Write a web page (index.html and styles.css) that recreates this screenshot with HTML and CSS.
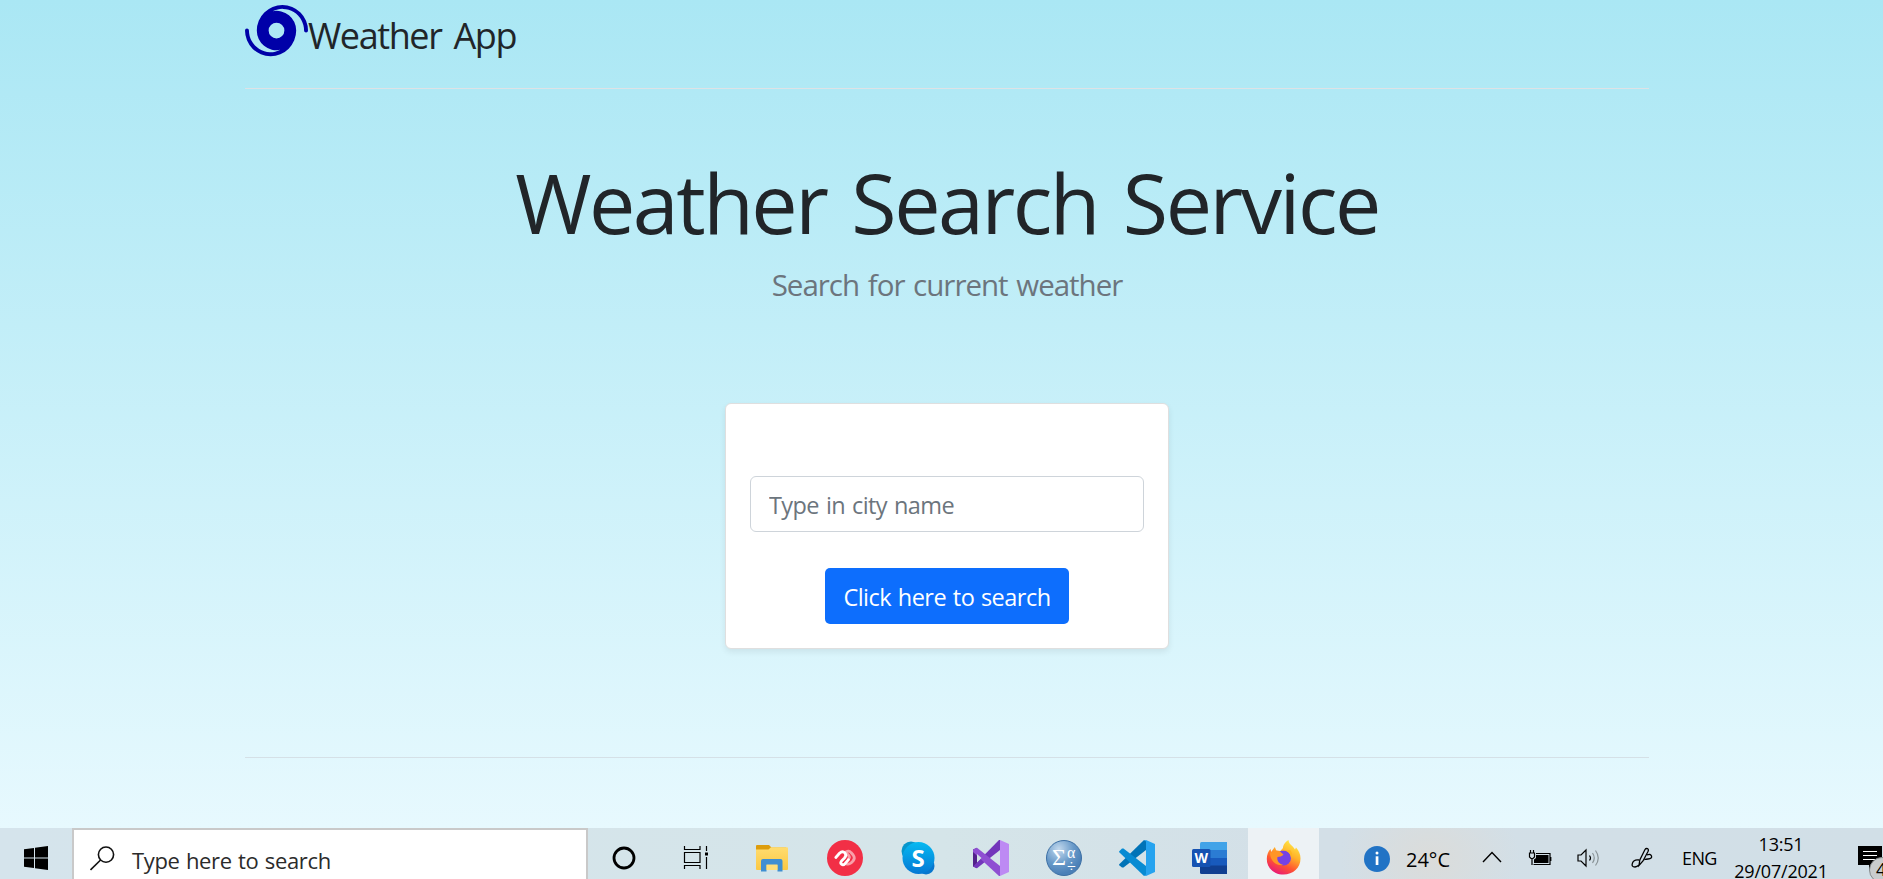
FILE: index.html
```html
<!DOCTYPE html>
<html lang="en">
<head>
<meta charset="utf-8">
<title>Weather App</title>
<link rel="stylesheet" href="styles.css">
</head>
<body>
<div class="page">
  <header class="site-header">
    <svg class="logo" viewBox="0 0 16 16" fill="#0000a8"><path d="M6.999 2.6A5.5 5.5 0 0 1 15 7.5a.5.5 0 0 0 1 0 6.5 6.5 0 1 0-13 0 5 5 0 0 0 6.001 4.9A5.5 5.5 0 0 1 1 7.5a.5.5 0 0 0-1 0 6.5 6.5 0 1 0 13 0 5 5 0 0 0-6.001-4.9zM10 7.5a2 2 0 1 1-4 0 2 2 0 0 1 4 0z"/></svg>
    <span class="brand">Weather App</span>
  </header>
  <main class="main">
    <h1 class="title">Weather Search Service</h1>
    <p class="subtitle">Search for current weather</p>
    <form class="card">
      <input class="city" type="text" placeholder="Type in city name">
      <button class="submit" type="button">Click here to search</button>
    </form>
  </main>
  <footer class="site-footer"></footer>
</div>
<div class="taskbar">
  <div class="start"><svg width="24" height="24" viewBox="0 0 24 24"><path d="M0 3.3 10 2v9.4H0zM11 1.8 24 0v11.4H11zM0 12.4h10V22L0 20.7zM11 12.4h13V24l-13-1.8z"/></svg></div>
  <div class="search">
    <svg width="26" height="26" viewBox="0 0 26 26" fill="none" stroke="#111" stroke-width="1.6"><circle cx="16" cy="8.600" r="7.6"/><path d="M10.600 14 .500 24"/></svg>
    <span class="search-text">Type here to search</span>
  </div>
  <div class="app cortana"><svg width="36" height="36" viewBox="0 0 36 36"><circle cx="18" cy="18" r="10" fill="none" stroke="#000" stroke-width="2.8"/></svg></div>
  <div class="app taskview"><svg width="36" height="36" viewBox="0 0 36 36" fill="none" stroke="#000" stroke-width="1.2"><path d="M4.500 6v3.500h15.500V6M4.500 12.500h15.500v10H4.500zM4.500 29v-3.500h15.500V29M26.500 6v5M26.500 17v12"/><path d="M25 12.500h3v3h-3z" fill="#000" stroke="none"/></svg></div>
  <div class="app"><svg width="36" height="36" viewBox="0 0 36 36"><defs><linearGradient id="fold" x1="0" y1="0" x2="0" y2="1"><stop offset="0" stop-color="#ffdc70"/><stop offset="1" stop-color="#fbc843"/></linearGradient></defs><path d="M2 6q0-1 1-1h12l2.500 2.500H32V12H2z" fill="#dd9d0d"/><path d="M2 9.500h12.500L17 7.300h16q1 0 1 1V29q0 1-1 1H3q-1 0-1-1z" fill="url(#fold)"/><path d="M7 31.500V21q0-2 2-2h17.500q2 0 2 2v10.500H23.500V25H12.500v6.500z" fill="#3f8fd2"/><path d="M12.500 24.500h11V30h-11z" fill="#ffdf7b"/></svg></div>
  <div class="app"><svg width="36" height="36" viewBox="0 0 36 36"><circle cx="18" cy="18" r="18" fill="#f22f46"/><g fill="none" stroke-width="2.800" stroke-linecap="round" stroke-linejoin="round"><path d="M19 12q3-2 5 .5l2.200 2.500q2.300 3-.2 6l-2 2q-2.500 2-5 .5M19 12.500l3 3.500q1 1.500-.5 3" stroke="#f9a0a9"/><path d="M8.800 17.500 12.500 13.300q3-2.800 5.500-.3 1.800 2.500-.5 5l-3 3q-1.500 2 0 3.200 1.700 1.300 3.500-.5l3.500-4" stroke="#fff"/></g></svg></div>
  <div class="app"><svg width="36" height="36" viewBox="0 0 36 36"><defs><linearGradient id="sky" x1="0" y1="0" x2="0" y2="1"><stop offset="0" stop-color="#06b9f1"/><stop offset="1" stop-color="#0578d4"/></linearGradient></defs><circle cx="11" cy="11" r="9.500" fill="#0796cc"/><circle cx="26" cy="26" r="8.500" fill="#0877ce"/><circle cx="18.500" cy="18" r="16" fill="url(#sky)"/><text x="18" y="26.500" class="skype-s" text-anchor="middle">S</text></svg></div>
  <div class="app"><svg width="36" height="36" viewBox="0 0 36 36"><path d="M0 9.500 4 7.700V28.300L0 26.500z" fill="#52218a"/><path d="M0 26.500 26 0h1v10L4 28.300z" fill="#7336bb"/><path d="M0 9.500 4 7.700 27 26v10h-1L0 12z" fill="#8f4fd2"/><path d="M4 14v8l4.500-4z" fill="#d4e1e7"/><path d="M27 0 36 4v28l-9 4z" fill="#bd8af3"/></svg></div>
  <div class="app"><svg width="36" height="36" viewBox="0 0 36 36"><defs><radialGradient id="math" cx=".35" cy=".25" r=".7"><stop offset="0" stop-color="#c3d9ed"/><stop offset=".6" stop-color="#699ac9"/><stop offset="1" stop-color="#4b80b7"/></radialGradient></defs><circle cx="18" cy="18" r="17.500" fill="url(#math)" stroke="#3c6fa4"/><text x="6" y="25" class="sigma">Σ</text><text x="21" y="18" class="alpha">α</text><text x="21" y="32" class="alpha">÷</text></svg></div>
  <div class="app"><svg width="36" height="36" viewBox="0 0 36 36"><path d="M0 24.500 25 0l2 1v9L4.500 27.500H3L.5 25.500z" fill="#0073b7"/><path d="M0 11.500 3 8.500h1.500L27 26v9l-2 1L.5 12.500z" fill="#078bd3"/><path d="M25 35.800q2-.5 2-2V2q0-1.500-2-2h2l9 4v28l-9 4z" fill="#26a3ef"/></svg></div>
  <div class="app"><svg width="36" height="36" viewBox="0 0 36 36"><path d="M8 4q0-2 1.500-2H35v9H8z" fill="#41a3e8"/><path d="M8 10h27v8H8z" fill="#2b7cd3"/><path d="M8 18h27v8H8z" fill="#185abd"/><path d="M8 25.500h27V34H9.500Q8 34 8 32.500z" fill="#103f91"/><rect x="0" y="9" width="18.500" height="18" rx="1.500" fill="#1552b2"/><text x="9.200" y="23" class="word-w" text-anchor="middle">W</text></svg></div>
  <div class="app active"><svg width="36" height="36" viewBox="0 0 36 36"><defs><linearGradient id="ff" x1=".8" y1="0" x2=".3" y2="1"><stop offset="0" stop-color="#fff04a"/><stop offset=".4" stop-color="#ffb02a"/><stop offset=".7" stop-color="#ff5530"/><stop offset="1" stop-color="#e8177a"/></linearGradient></defs><path d="M17.500 34.500C8 34.500.8 28 .8 19c0-4 1.500-8 3.800-10l.5 3 3.700-5 1.500 3.500 4 .5L17 8c0-3 2.500-6.500 5.500-8 .3 4 3 5 5 7.500l1.500 2 1-2c3 3 4.500 7 4.500 11C34.500 28 27 34.500 17.500 34.500z" fill="url(#ff)"/><circle cx="17.500" cy="18" r="7.500" fill="#7542e5"/><path d="M4 13c4-3 8-2.500 10-1.500l3.500 3c-1.500 2-4 2.200-6 2.500-1 4 2 7 6 8-8 1-13-4-13.500-12z" fill="#ff9526"/><path d="M16 11c5-1 9 2 9 7 2-3 1-6-1-8z" fill="#ffb41f"/></svg></div>
  <div class="tray">
    <svg class="info" width="26" height="26" viewBox="0 0 26 26"><circle cx="13" cy="13" r="13" fill="#2173c5"/><circle cx="13" cy="7" r="1.500" fill="#fff"/><path d="M11.700 10.300h2.700V19h-2.700z" fill="#fff"/></svg>
    <span class="temp">24°C</span>
    <svg class="chevron" width="20" height="14" viewBox="0 0 20 14" fill="none" stroke="#000" stroke-width="1.400"><path d="m1 12 9-9.500L19 12"/></svg>
    <svg class="battery" width="24" height="18" viewBox="0 0 24 18"><g fill="none" stroke="#000" stroke-width="1.200"><path d="M8 4.500h14v11H5.500M22.800 8v4M1.500 4h5v4L5 9.500H3L1.500 8zM2.500 4V1M5.500 4V1M4 9.500V16"/></g><path d="M8 6h12.500v8H6v-3.500L8 9z"/></svg>
    <svg class="volume" width="24" height="20" viewBox="0 0 24 20" fill="none" stroke="#000" stroke-width="1.200"><path d="M1 7h3l5-5v16l-5-5H1z"/><path d="M12.500 7.500q2 2.500 0 5"/><path d="M15.500 5q3.500 5 0 10M18.500 2.500q5.500 7.500 0 15" stroke="#8a9498"/></svg>
    <svg class="pen" width="22" height="22" viewBox="0 0 22 22" fill="none" stroke="#000" stroke-width="1.300"><path d="M8 18.500 8.800 13 14 2.500q1-1.500 2.500-.8T17 4.500L12 14zM8 13Q3 12 1.500 16T4 20q2-.2 4-2M16 8q3.500-1.500 4.500 1t-3.500 3-3.500 1"/></svg>
    <span class="lang">ENG</span>
    <div class="clock"><span class="time">13:51</span><span class="date">29/07/2021</span></div>
    <svg class="notify" width="25" height="33" viewBox="0 0 25 33"><path d="M0 0h24v19H15l-4 5v-5H0z"/><path d="M5 5.500h14M5 9.500h14M5 13.500h14" stroke="#fff" stroke-width="1.200"/><circle cx="24" cy="24" r="12.500" fill="#c9cccd" stroke="#858a8c"/><text x="18" y="30" class="badge">4</text></svg>
  </div>
</div>
</body>
</html>
```
FILE: styles.css
```css
* { box-sizing: border-box; }
html, body { margin: 0; height: 100%; overflow: hidden; }
body {
  display: flex;
  flex-direction: column;
  font-family: "Open Sans", "Noto Sans", sans-serif;
  color: #212529;
}
svg { display: block; flex: none; }
span { white-space: nowrap; }
.page {
  height: 828px;
  flex: none;
  padding: 0 234px 0 245px;
  background: linear-gradient(#aae7f4, #e7f9fe);
}
.site-header {
  display: flex;
  align-items: flex-start;
  height: 89px;
  border-bottom: 1px solid #dee2e6;
}
.logo { width: 63px; height: 63px; margin-top: 1px; }
.brand { font-size: 36px; line-height: 71px; letter-spacing: -1.4px; word-spacing: 4px; }
.main { display: flex; flex-direction: column; align-items: center; padding-top: 63px; }
.title { margin: 0; font-size: 82.6px; font-weight: 400; line-height: 100px; letter-spacing: -2.5px; word-spacing: 6px; white-space: nowrap; }
.subtitle { margin: 10px 0 96px; font-size: 29.5px; line-height: 45px; letter-spacing: -1px; word-spacing: 2px; color: #6c757d; }
.card {
  display: flex;
  flex-direction: column;
  align-items: center;
  width: 444px;
  height: 246px;
  padding: 72px 24px 0;
  background: #fff;
  border: 1px solid #dfdfdf;
  border-radius: 6px;
  box-shadow: 0 3px 6px rgba(0, 0, 0, 0.075);
}
.city {
  width: 394px;
  height: 56px;
  padding: 1px 18px 0;
  border: 1px solid #ced4da;
  border-radius: 6px;
  font: 23.5px "Open Sans", sans-serif;
  letter-spacing: -0.6px;
  word-spacing: 1.5px;
}
.city::placeholder { color: #6c757d; opacity: 1; }
.submit {
  width: 244px;
  height: 56px;
  margin-top: 36px;
  padding: 1px 0 0;
  border: 0;
  border-radius: 5px;
  background: #0d6efd;
  color: #fff;
  font: 23.5px "Open Sans", sans-serif;
  letter-spacing: -0.5px;
  word-spacing: 1px;
  white-space: nowrap;
}
.site-footer { margin-top: 108px; border-top: 1px solid #d5e0e6; }
.taskbar {
  display: flex;
  height: 51px;
  flex: none;
  overflow: hidden;
  background:
    radial-gradient(ellipse 90px 70px at 1430px 30px, #dbdcda, rgba(219, 220, 218, 0)),
    linear-gradient(90deg, #d5e4ec, #d5e5e9 50%, #d3dfe7 70%, #d1dfe7);
}
.start { width: 72px; padding: 18px 0 0 24px; }
.search {
  display: flex;
  width: 516px;
  padding: 16px 0 0 16px;
  border: 2px solid #c9c9c9;
  border-bottom: 0;
  background: #fff;
}
.search-text { margin: -1px 0 0 16px; font-size: 22px; line-height: 30px; letter-spacing: -0.35px; word-spacing: 1px; color: #2b2b2b; }
.app { display: flex; justify-content: center; width: 73px; flex: none; padding-top: 12px; }
.cortana { width: 72px; }
.taskview { width: 75px; }
.active { width: 71px; margin-left: 2px; background: #edf2f5; }
.skype-s { font: 700 24px "Open Sans", sans-serif; fill: #fff; }
.sigma { font: 24px "Liberation Serif", serif; fill: #fff; }
.alpha { font: 16px "Liberation Serif", serif; fill: #fff; }
.word-w { font: 700 14px "Open Sans", sans-serif; fill: #fff; }
.tray { display: flex; align-items: flex-start; width: 564px; flex: none; color: #000; }
.info { margin: 18px 0 0 45px; }
.temp { width: 75px; margin: 17px 0 0 16px; font-size: 20px; line-height: 30px; letter-spacing: 0; }
.chevron { margin: 22px 0 0 1px; }
.battery { margin: 21px 0 0 26px; }
.volume { margin: 20px 0 0 25px; }
.pen { margin: 19px 0 0 30px; }
.lang { width: 50px; margin: 15px 0 0 29px; font-size: 18px; line-height: 30px; letter-spacing: -0.6px; }
.clock { display: flex; flex-direction: column; align-items: center; width: 98px; font-size: 18px; line-height: 27px; letter-spacing: -0.2px; margin-top: 3px; }
.notify { margin: 18px 0 0 28px; }
.badge { font: 18px "Open Sans", sans-serif; }
```
